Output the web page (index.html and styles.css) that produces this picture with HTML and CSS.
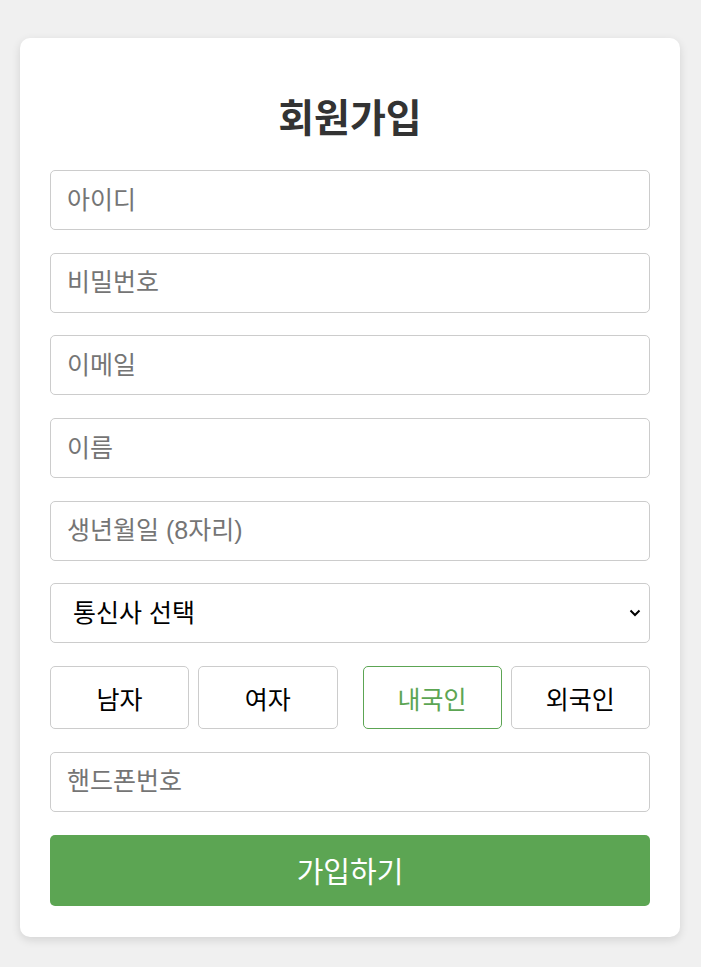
FILE: index.html
```html
<!DOCTYPE html>
<html lang="ko">
<head>
<meta charset="utf-8">
<title>회원가입</title>
<link rel="stylesheet" href="styles.css">
</head>
<body>
<div class="card">
  <h2 class="title">회원가입</h2>
  <form class="form">
    <input class="field" type="text" placeholder="아이디">
    <input class="field" type="password" placeholder="비밀번호">
    <input class="field" type="email" placeholder="이메일">
    <input class="field" type="text" placeholder="이름">
    <input class="field" type="text" placeholder="생년월일 (8자리)">
    <div class="select-wrap">
      <select class="field select">
        <option>통신사 선택</option>
      </select>
      <svg class="chev" width="12" height="8" viewBox="0 0 12 8"><path d="M1.5 1.5 L6 6 L10.5 1.5" fill="none" stroke="#000" stroke-width="2"/></svg>
    </div>
    <div class="toggles">
      <div class="group">
        <button type="button" class="opt">남자</button>
        <button type="button" class="opt">여자</button>
      </div>
      <div class="group">
        <button type="button" class="opt active">내국인</button>
        <button type="button" class="opt">외국인</button>
      </div>
    </div>
    <input class="field" type="tel" placeholder="핸드폰번호">
    <button type="submit" class="submit">가입하기</button>
  </form>
</div>
</body>
</html>
```
FILE: styles.css
```css
* { box-sizing: border-box; }
html, body { margin: 0; padding: 0; }
body {
  background: #f0f0f0;
  font-family: "Liberation Sans", "Noto Sans CJK KR", sans-serif;
  padding: 38px 21px 30px 20px;
}
.card {
  background: #fff;
  border-radius: 10px;
  box-shadow: 0 3px 10px rgba(0,0,0,0.12);
  padding: 56px 30px 31px;
}
.title {
  margin: 0 0 26px;
  text-align: center;
  font-size: 39px;
  font-weight: bold;
  color: #333;
  line-height: 50px;
}
.form { display: flex; flex-direction: column; gap: 22.7px; }
.field {
  display: block;
  width: 100%;
  height: 60px;
  padding: 0 16px;
  border: 1px solid #ccc;
  border-radius: 5px;
  font-family: inherit;
  font-size: 25px;
  color: #000;
  background: #fff;
  outline: none;
}
.field::placeholder { color: #757575; }
.select-wrap { position: relative; }
.select { appearance: none; -webkit-appearance: none; padding-left: 22px; }
.chev { position: absolute; right: 9px; top: 26px; pointer-events: none; }
.toggles { display: flex; gap: 25px; }
.group { flex: 1; display: flex; gap: 9px; }
.opt {
  flex: 1;
  height: 63px;
  border: 1px solid #ccc;
  border-radius: 5px;
  background: #fff;
  font-family: inherit;
  font-size: 25px;
  color: #000;
  padding: 0;
}
.opt.active { border-color: #5ca553; color: #5ca553; }
.submit {
  height: 71px;
  border: none;
  border-radius: 5px;
  background: #5ca553;
  color: #fff;
  font-family: inherit;
  font-size: 29px;
  padding: 0;
}
```
